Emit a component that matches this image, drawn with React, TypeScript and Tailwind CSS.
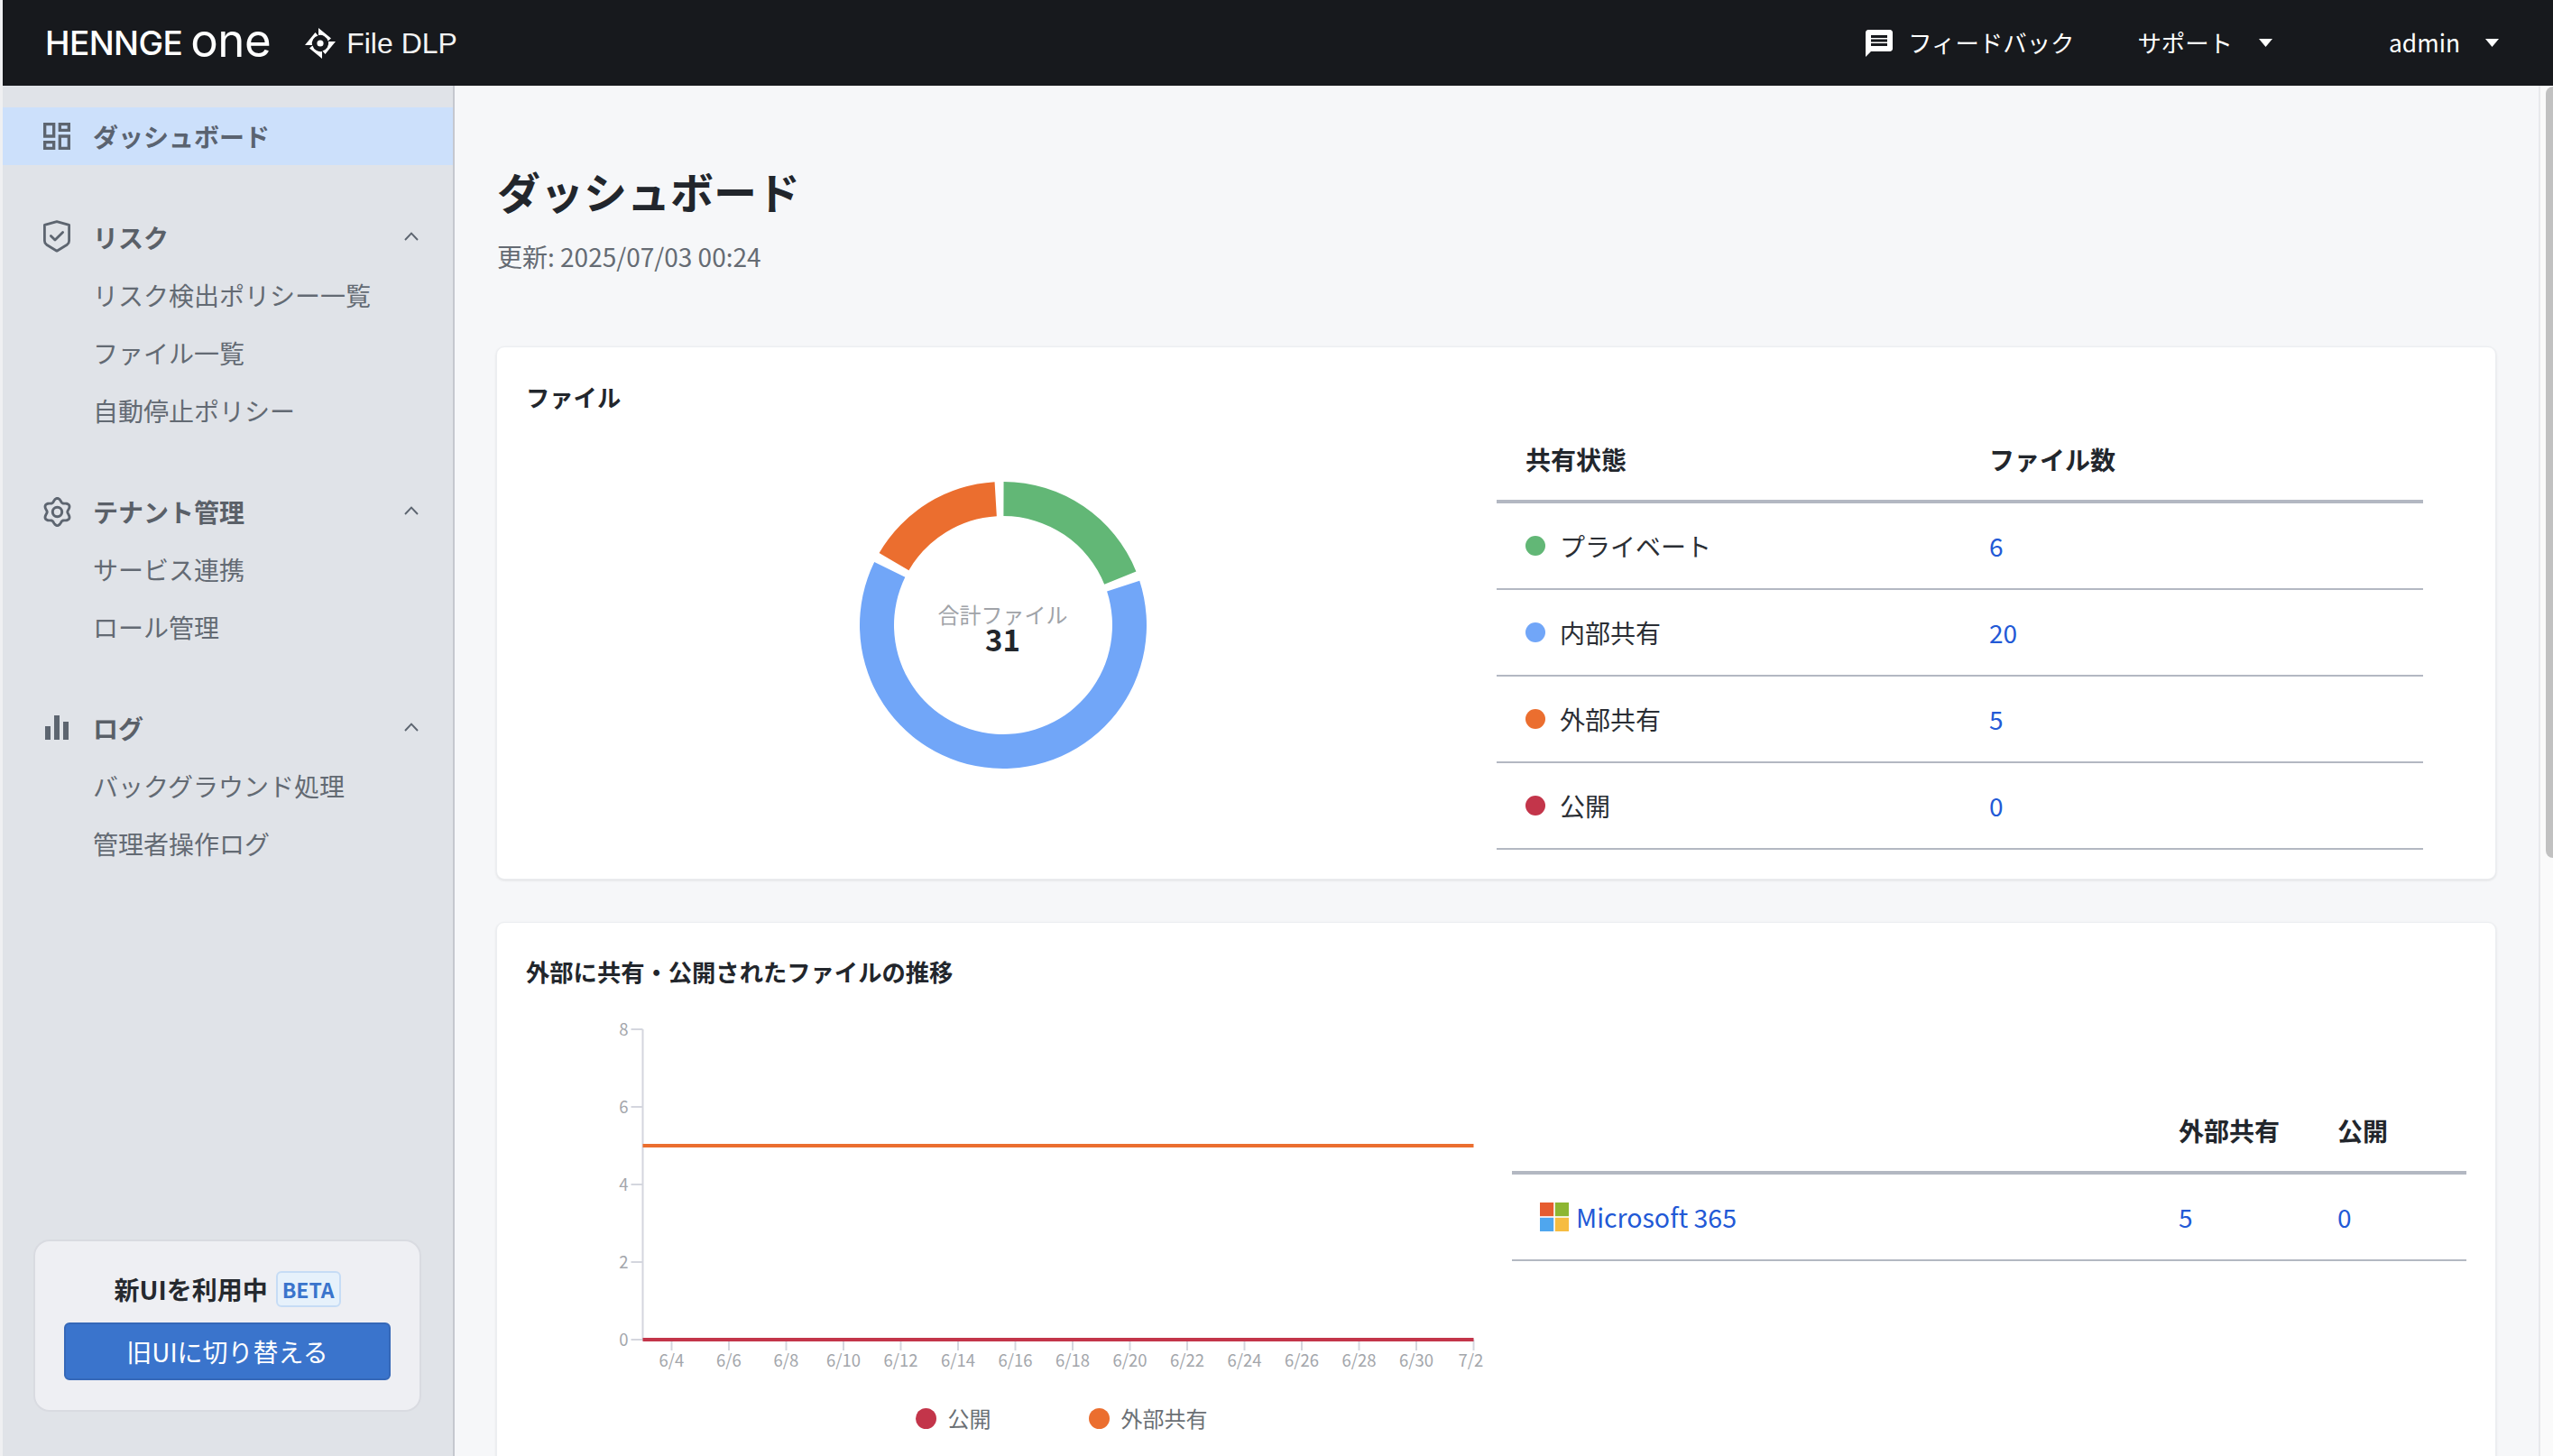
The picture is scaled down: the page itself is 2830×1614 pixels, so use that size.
import { MdMessage } from 'react-icons/md';

const navSections = [
  { title: 'リスク', icon: 'shield', items: ['リスク検出ポリシー一覧', 'ファイル一覧', '自動停止ポリシー'] },
  { title: 'テナント管理', icon: 'gear', items: ['サービス連携', 'ロール管理'] },
  { title: 'ログ', icon: 'bars', items: ['バックグラウンド処理', '管理者操作ログ'] },
];

const shareRows = [
  { label: 'プライベート', count: 6, dot: 'bg-[#62b776]' },
  { label: '内部共有', count: 20, dot: 'bg-[#71a6f8]' },
  { label: '外部共有', count: 5, dot: 'bg-[#eb6e2f]' },
  { label: '公開', count: 0, dot: 'bg-[#c3354a]' },
];

const xLabels = ['6/4', '6/6', '6/8', '6/10', '6/12', '6/14', '6/16', '6/18', '6/20', '6/22', '6/24', '6/26', '6/28', '6/30', '7/2'];

const bladePath = 'M15 0 L29 11.5 L25.5 14.5 A9 9 0 0 0 15 8 Z';

// angles are clockwise from 12 o'clock
function arcPath(a0: number, a1: number, ro: number, ri: number, c: number) {
  const pt = (a: number, r: number) => {
    const t = (a * Math.PI) / 180;
    return `${(c + r * Math.sin(t)).toFixed(2)} ${(c - r * Math.cos(t)).toFixed(2)}`;
  };
  const large = a1 - a0 > 180 ? 1 : 0;
  return `M${pt(a0, ro)} A${ro} ${ro} 0 ${large} 1 ${pt(a1, ro)} L${pt(a1, ri)} A${ri} ${ri} 0 ${large} 0 ${pt(a0, ri)} Z`;
}

function gearPath() {
  const pts: string[] = [];
  for (let i = 0; i < 120; i++) {
    const t = (i / 120) * Math.PI * 2;
    const r = 13.2 + 1.9 * Math.cos(6 * t);
    pts.push(`${(16.5 + r * Math.sin(t)).toFixed(2)} ${(16.5 - r * Math.cos(t)).toFixed(2)}`);
  }
  return `M${pts.join('L')}Z`;
}

function NavIcon({ name }: { name: string }) {
  if (name === 'shield') {
    return (
      <svg width="30" height="36" viewBox="0 0 30 36" fill="none" stroke="#5d6570" strokeWidth="2.8" className="shrink-0 -translate-y-[1px]">
        <path d="M15 1.6 L28.6 5.4 V23 Q28.6 25.6 26.4 27.2 L15 34.2 L3.6 27.2 Q1.4 25.6 1.4 23 V5.4 Z" strokeLinejoin="round" />
        <path d="M8.4 17.4 L13 22 L21.6 13.4" strokeLinecap="round" strokeLinejoin="round" />
      </svg>
    );
  }
  if (name === 'gear') {
    return (
      <svg width="33" height="33" viewBox="0 0 33 33" fill="none" stroke="#5d6570" strokeWidth="2.9" className="shrink-0 -mx-[1.5px]">
        <path d={gearPath()} strokeLinejoin="round" />
        <circle cx="16.5" cy="16.5" r="5.2" strokeWidth="3" />
      </svg>
    );
  }
  return (
    <svg width="30" height="30" viewBox="0 0 30 30" fill="#5d6570" className="shrink-0">
      <rect x="2" y="13" width="6" height="15" />
      <rect x="12" y="1" width="6" height="27" />
      <rect x="22" y="8" width="6" height="20" />
    </svg>
  );
}

function Caret() {
  return (
    <svg width="15" height="9" viewBox="0 0 15 9" fill="#ffffff" className="shrink-0">
      <path d="M0 0 H15 L7.5 9 Z" />
    </svg>
  );
}

function Chevron() {
  return (
    <svg width="16" height="10" viewBox="0 0 16 10" fill="none" stroke="#5d6570" strokeWidth="1.9" className="shrink-0 -translate-y-[1px]">
      <path d="M1 9 L8 1.6 L15 9" />
    </svg>
  );
}

function Card({ className, children }: { className?: string; children: React.ReactNode }) {
  return (
    <section className={`rounded-[9px] border border-[#eceef1] bg-white shadow-[0_1px_3px_rgba(0,0,0,0.1)] ${className ?? ''}`}>
      {children}
    </section>
  );
}

function Donut() {
  return (
    <div className="relative mt-[60px] h-[340px] w-[340px]">
      <svg width="340" height="340" viewBox="0 0 340 340">
        <path d={arcPath(0.2, 68, 159, 121, 170)} fill="#62b776" />
        <path d={arcPath(72, 296.1, 159, 121, 170)} fill="#71a6f8" />
        <path d={arcPath(300.2, 356.6, 159, 121, 170)} fill="#eb6e2f" />
      </svg>
      <div className="absolute inset-x-0 top-[146px] flex flex-col items-center">
        <span className="text-[24px] leading-[24px] text-[#a0a3a8]">合計ファイル</span>
        <span className="text-[33px] font-bold leading-[30px] text-[#22262c]">31</span>
      </div>
    </div>
  );
}

function TrendChart() {
  const yTicks = [
    { label: '8', y: 28 },
    { label: '6', y: 114 },
    { label: '4', y: 200 },
    { label: '2', y: 286 },
    { label: '0', y: 372 },
  ];
  return (
    <svg width="1068" height="420" viewBox="0 0 1068 420" className="block">
      <path d="M129.5 28 V372 H1050.5" fill="none" stroke="#d4d6de" strokeWidth="2" />
      {yTicks.map((t) => (
        <g key={t.label}>
          <line x1="116.5" x2="129.5" y1={t.y} y2={t.y} stroke="#d4d6de" strokeWidth="2" />
          <text x="113.5" y={t.y + 7} textAnchor="end" fontSize="18.5" fill="#a3a6ab">{t.label}</text>
        </g>
      ))}
      {xLabels.map((label, i) => {
        const x = 161.5 + i * 63.5;
        return (
          <g key={label}>
            <line x1={x} x2={x} y1="372" y2="384" stroke="#d4d6de" strokeWidth="2" />
            <text x={i === xLabels.length - 1 ? x - 3 : x} y="402" textAnchor="middle" fontSize="18.5" fill="#a3a6ab">{label}</text>
          </g>
        );
      })}
      <line x1="129.5" x2="1050.5" y1="157" y2="157" stroke="#eb6e2f" strokeWidth="4" />
      <line x1="129.5" x2="1050.5" y1="372" y2="372" stroke="#c3354a" strokeWidth="4" />
    </svg>
  );
}

export default function App() {
  return (
    <div className="flex h-screen w-full flex-col overflow-hidden bg-[#eff0f2] pl-[3px] font-['Noto_Sans_CJK_JP','Noto_Sans',sans-serif]">
      <header className="flex h-[95px] shrink-0 items-center justify-between bg-[#17191d] pl-[47px] pr-[60px] text-white">
        <div className="flex items-center">
          <span className="font-['Inter',sans-serif] text-[37px] font-medium leading-none tracking-[-0.6px]">HENNGE</span>
          <span className="ml-[9px] font-['Inter',sans-serif] text-[51px] font-normal leading-none tracking-[-0.5px] -translate-y-[3px]">one</span>
          <svg width="34" height="34" viewBox="0 0 34 34" fill="#ffffff" className="ml-[38px]">
            <circle cx="17" cy="17" r="3.6" />
            <path d={bladePath} />
            <path d={bladePath} transform="rotate(90 17 17)" />
            <path d={bladePath} transform="rotate(180 17 17)" />
            <path d={bladePath} transform="rotate(270 17 17)" />
          </svg>
          <span className="ml-[12px] font-['Liberation_Sans',sans-serif] text-[32px] leading-none text-[#f4f4f4]">File DLP</span>
        </div>
        <div className="flex items-center text-[26.4px] leading-none">
          <MdMessage className="h-[36px] w-[36px]" />
          <span className="ml-[14px]">フィードバック</span>
          <span className="ml-[70px]">サポート</span>
          <span className="ml-[29px]"><Caret /></span>
          <span className="ml-[129px]">admin</span>
          <span className="ml-[28px]"><Caret /></span>
        </div>
      </header>

      <div className="flex min-h-0 flex-1">
        <aside className="flex w-[501px] shrink-0 flex-col border-r-2 border-[#c5c8cf] bg-[#e0e3e8] pt-[24px]">
          <div className="flex h-[64px] items-center gap-[25px] bg-[#cce0fb] pl-[45px] text-[28px] font-bold text-[#5a6370]">
            <svg width="30" height="30" viewBox="3 3 18 18" fill="#5d6570" className="shrink-0">
              <path d="M19 5v2h-4V5h4M9 5v6H5V5h4m10 8v6h-4v-6h4M9 17v2H5v-2h4M21 3h-8v6h8V3zM11 3H3v10h8V3zm10 8h-8v10h8V11zm-10 4H3v6h8v-6z" />
            </svg>
            ダッシュボード
          </div>
          {navSections.map((section) => (
            <div key={section.title} className="mt-[48px]">
              <div className="flex h-[64px] items-center gap-[25px] pl-[45px] pr-[38px] text-[28px] font-bold text-[#5a6068]">
                <NavIcon name={section.icon} />
                <span className="flex-1">{section.title}</span>
                <Chevron />
              </div>
              {section.items.map((item) => (
                <div key={item} className="flex h-[64px] items-center pl-[100px] text-[28px] text-[#636a73]">
                  {item}
                </div>
              ))}
            </div>
          ))}
          <div className="mb-[49px] ml-[34px] mr-[35px] mt-auto flex h-[191px] flex-col items-center rounded-[18px] border-2 border-[#d9dbe1] bg-[#eeeff3] px-[32px] pt-[33px]">
            <div className="flex items-center gap-[9px]">
              <span className="text-[28px] font-bold leading-[40px] text-[#25292e]">新UIを利用中</span>
              <span className="rounded-[6px] border-2 border-[#c6dcf5] bg-[#e6f1fb] px-[5px] text-[23px] font-bold leading-[36px] text-[#3a74cc]">BETA</span>
            </div>
            <button className="mt-[17px] h-[64px] w-full rounded-[6px] border-2 border-[#3568b8] bg-[#3a74cc] text-[28px] text-white">
              旧UIに切り替える
            </button>
          </div>
        </aside>

        <main className="min-w-0 flex-1 overflow-hidden bg-[#f6f7f9] pl-[46px] pr-[47px] pt-[84px]">
          <h1 className="pl-[1px] text-[48px] font-bold leading-[64px] text-[#22262c]">ダッシュボード</h1>
          <p className="mt-[21px] pl-[1px] text-[28px] leading-[40px] text-[#656b73]">更新: 2025/07/03 00:24</p>

          <Card className="mt-[80px] h-[591px] px-[32px] pt-[37px]">
            <h2 className="text-[26.3px] font-bold leading-[36px] text-[#22262c]">ファイル</h2>
            <div className="mt-[5px] flex items-start">
              <div className="flex w-[1057px] justify-center">
                <Donut />
              </div>
              <div className="ml-[19px] w-[1027px]">
                <div className="grid h-[95px] grid-cols-[514px_1fr] items-center border-b-4 border-[#b3b8c2] pl-[32px] text-[28px] font-bold text-[#22262c]">
                  <span>共有状態</span>
                  <span>ファイル数</span>
                </div>
                {shareRows.map((row) => (
                  <div key={row.label} className="grid h-[96px] grid-cols-[514px_1fr] items-center border-b-2 border-[#b3b8c2] pl-[32px] text-[28px]">
                    <span className="flex items-center gap-[16px] text-[#2a2e34]">
                      <span className={`h-[22px] w-[22px] rounded-full ${row.dot}`} />
                      {row.label}
                    </span>
                    <span className="text-[#2259d6]">{row.count}</span>
                  </div>
                ))}
              </div>
            </div>
          </Card>

          <Card className="mt-[47px] h-[700px] px-[32px] pt-[36px]">
            <h2 className="text-[26.3px] font-bold leading-[36px] text-[#22262c]">外部に共有・公開されたファイルの推移</h2>
            <div className="mt-[18px] flex items-start">
              <div className="w-[1068px] shrink-0">
                <TrendChart />
                <div className="mt-[22px] flex items-center justify-center pl-[119px] text-[24px] leading-[34px] text-[#6b7075]">
                  <span className="h-[23px] w-[23px] rounded-full bg-[#c3354a]" />
                  <span className="ml-[13px]">公開</span>
                  <span className="ml-[108px] h-[23px] w-[23px] rounded-full bg-[#eb6e2f]" />
                  <span className="ml-[13px]">外部共有</span>
                </div>
              </div>
              <div className="ml-[25px] min-w-0 flex-1">
                <div className="grid h-[189px] grid-cols-[707px_176px_1fr] items-end border-b-4 border-[#b3b8c2] pb-[25px] text-[28px] font-bold leading-[40px] text-[#22262c]">
                  <span />
                  <span className="pl-[32px]">外部共有</span>
                  <span className="pl-[32px]">公開</span>
                </div>
                <div className="grid h-[96px] grid-cols-[707px_176px_1fr] items-center border-b-2 border-[#b3b8c2] text-[28px] text-[#2259d6]">
                  <span className="flex items-center gap-[8px] pl-[31px] text-[28.5px]">
                    <svg width="32" height="32" viewBox="0 0 32 32" className="shrink-0">
                      <rect width="15.2" height="15.2" fill="#e65c2f" />
                      <rect x="16.8" width="15.2" height="15.2" fill="#8db632" />
                      <rect y="16.8" width="15.2" height="15.2" fill="#4fa6ee" />
                      <rect x="16.8" y="16.8" width="15.2" height="15.2" fill="#f6bc41" />
                    </svg>
                    Microsoft 365
                  </span>
                  <span className="pl-[32px]">5</span>
                  <span className="pl-[32px]">0</span>
                </div>
              </div>
            </div>
          </Card>
        </main>

        <div className="w-[16px] shrink-0 border-l-2 border-[#e8e9ec] bg-[#fafafa] pl-[6px] pt-[1px]">
          <div className="h-[855px] w-[8px] rounded-l-[8px] bg-[#c1c1c1]" />
        </div>
      </div>
    </div>
  );
}
